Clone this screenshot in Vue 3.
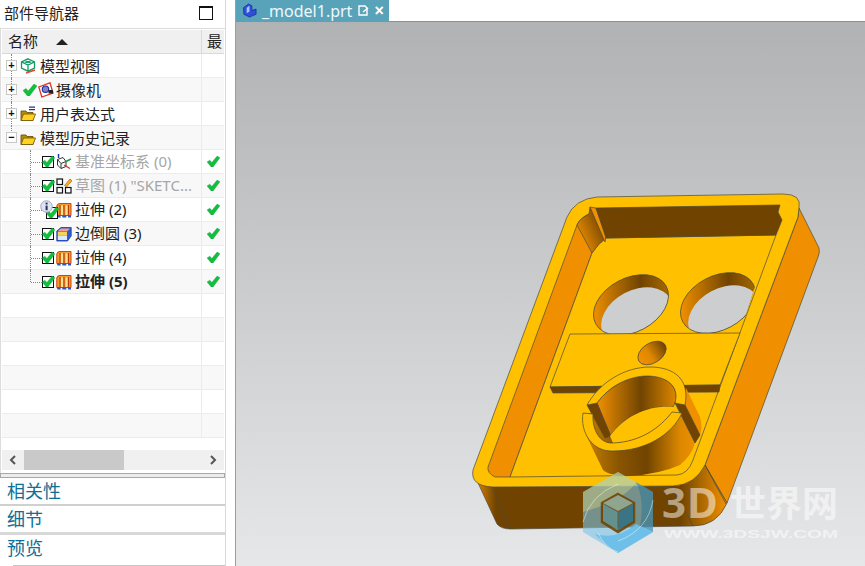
<script setup>
const treeTop = [
  { label: '模型视图', sign: '+', icon: 'view' },
  { label: '摄像机', sign: '+', icon: 'camera', check: true },
  { label: '用户表达式', sign: '+', icon: 'folderList' },
  { label: '模型历史记录', sign: '−', icon: 'folder', last: true },
]
const features = [
  { label: '基准坐标系 (0)', icon: 'datum', muted: true },
  { label: '草图 (1) "SKETC...', icon: 'sketch', muted: true },
  { label: '拉伸 (2)', icon: 'extrude', info: true },
  { label: '边倒圆 (3)', icon: 'blend' },
  { label: '拉伸 (4)', icon: 'extrude' },
  { label: '拉伸 (5)', icon: 'extrude', bold: true, end: true },
]
const emptyRows = 6
const checkPath = 'M0 6.500 L3 4.500 L5.200 7 L11 0 L14 2 L6.500 12 H4.500 Z'
</script>

<template>
  <div class="app">
    <aside class="side">
      <div class="side-inner">
        <header class="title">
          <span>部件导航器</span>
          <i class="maximize"></i>
        </header>
        <section class="table">
          <div class="thead">
            <div class="th-name">名称<i class="sort"></i></div>
            <div class="th-last">最</div>
          </div>
          <div class="tbody">
            <div v-for="(r, i) in treeTop" :key="r.label" class="row" :class="{ alt: i % 2 === 1 }">
              <div class="cell-name top" :class="{ 'has-trunk': !r.last, 'trunk-end': r.last }">
                <span class="expander">{{ r.sign }}</span>
                <svg v-if="r.check" class="mini-check" viewBox="0 0 14 12"><path :d="checkPath" fill="#12bf3a" stroke="#0a9a50" stroke-width=".4" /></svg>
                <svg class="icon" viewBox="0 0 16 16">
                  <template v-if="r.icon === 'view'">
                    <path d="M8 .8 L14.500 3.800 V10 L8 13.200 L1.500 10 V3.800 Z M1.500 3.800 L8 7 L14.500 3.800 M8 7 V13.200 M4.700 2.300 L11.300 5.400 M11.300 2.300 L4.700 5.400" fill="none" stroke="#0f9a66" stroke-width="1.300" />
                    <path d="M6 15 L15 12" stroke="#e8432a" stroke-width="1.600" />
                  </template>
                  <template v-else-if="r.icon === 'camera'">
                    <path d="M.8 5 L12 .8 L15 11 L3.800 15 Z" fill="#fff" stroke="#e0321c" stroke-width="1.300" />
                    <circle cx="7.500" cy="7.200" r="3.200" fill="#8a80c8" stroke="#1d2fa8" stroke-width="1.200" />
                    <rect x="10.500" y="8" width="4.500" height="3.500" fill="#222" />
                  </template>
                  <template v-else>
                    <path d="M1 5 H6 L7 6.500 H13 V14.500 H1 Z" fill="#b98a10" stroke="#6a5210" stroke-width=".9" />
                    <path d="M3.500 8 H15.500 L13 14.500 H1 Z" fill="#ffd21f" stroke="#7a5c10" stroke-width=".9" />
                    <path v-if="r.icon === 'folderList'" d="M9 1.200 H15 M9 3.600 H15" stroke="#2b2f9a" stroke-width="1.200" />
                  </template>
                </svg>
                <span class="label">{{ r.label }}</span>
              </div>
              <div class="cell-state"></div>
            </div>
            <div v-for="(f, i) in features" :key="f.label" class="row" :class="{ alt: i % 2 === 1 }">
              <div class="cell-name child" :class="{ 'child-end': f.end }">
                <span class="checkbox" :class="{ shifted: f.info }">
                  <svg viewBox="0 0 14 12"><path :d="checkPath" fill="#12bf3a" stroke="#0a9a50" stroke-width=".4" /></svg>
                </span>
                <svg v-if="f.info" class="info" viewBox="0 0 14 14">
                  <circle cx="7" cy="7" r="6.200" fill="#dfe4f2" stroke="#9aa3b8" />
                  <rect x="6" y="2.800" width="2.200" height="2" fill="#23306e" />
                  <rect x="6" y="6" width="2.200" height="5" fill="#23306e" />
                </svg>
                <svg class="icon" viewBox="0 0 16 16">
                  <template v-if="f.icon === 'datum'">
                    <path d="M1.500 5.500 L7 3.500 L10 7.500 L5 9.500 Z M1.500 5.500 V11 L5 14.500 V9.500 M5 14.500 L10 12.500 V7.500" fill="#fff" stroke="#333" stroke-width="1" />
                    <path d="M2.500 0 V4" stroke="#2030b0" stroke-width="1.400" />
                    <path d="M9 8 L15 5" stroke="#1c9a34" stroke-width="1.400" />
                    <path d="M8 11 L14 14.500" stroke="#d8302a" stroke-width="1.400" />
                  </template>
                  <template v-else-if="f.icon === 'sketch'">
                    <g fill="#fff" stroke="#111" stroke-width="1.200">
                      <rect x="1" y="1" width="5.500" height="5.500" />
                      <rect x="1" y="9.500" width="5.500" height="5.500" />
                      <rect x="9.500" y="9.500" width="5.500" height="5.500" />
                    </g>
                    <path d="M8.500 7.500 L14 1 L16 2.800 L10.500 9 Z" fill="#f5b21a" stroke="#a0601a" stroke-width=".7" />
                  </template>
                  <template v-else-if="f.icon === 'extrude'">
                    <path d="M.8 4 Q1 1.500 4 1.500 H15 V13.500 H.8 Z" fill="#f59a2e" stroke="#c8470e" stroke-width="1" />
                    <path d="M5 3.500 H7 V13 H5 Z M9.500 3.500 H11.500 V13 H9.500 Z" fill="#ffe28e" />
                    <path d="M4 3 V13.500 M8 3 V13.500 M12.500 3 V13.500" stroke="#b83c0c" stroke-width="1.100" />
                    <path d="M.8 13.500 H4 L5 15.500 H1.500 Z M6 13.500 H10 L10.500 15.500 H6.500 Z M12 13.500 H15 V15.500 H12 Z" fill="#3354c4" />
                  </template>
                  <template v-else>
                    <path d="M.8 5 L5 1.500 H15.200 V10 L11.500 15 H.8 Z" fill="#2f5cd0" stroke="#1c3a9a" stroke-width=".8" />
                    <path d="M2 5 L5 2.500 H14 L11 5.500 H2 Z" fill="#ff9a86" />
                    <path d="M1.800 6 H11 V9.500 H1.800 Z" fill="#f5d35a" />
                    <path d="M1.800 9.500 H11 V14 H1.800 Z" fill="#dfe8f7" />
                  </template>
                </svg>
                <span class="label" :class="{ muted: f.muted, strong: f.bold }">{{ f.label }}</span>
              </div>
              <div class="cell-state">
                <svg class="state-check" viewBox="0 0 14 12"><path :d="checkPath" fill="#12bf3a" stroke="#0a9a50" stroke-width=".4" /></svg>
              </div>
            </div>
            <div v-for="n in emptyRows" :key="n" class="row" :class="{ alt: n % 2 === 0 }">
              <div class="cell-name"></div>
              <div class="cell-state"></div>
            </div>
          </div>
          <div class="scrollbar">
            <svg class="chev" viewBox="0 0 8 10"><path d="M6 1 L2 5 L6 9" fill="none" stroke="#555" stroke-width="2" /></svg>
            <div class="track"><div class="thumb"></div></div>
            <svg class="chev" viewBox="0 0 8 10"><path d="M2 1 L6 5 L2 9" fill="none" stroke="#555" stroke-width="2" /></svg>
          </div>
        </section>
        <div class="sash"></div>
        <div class="panel-link first">相关性</div>
        <div class="panel-link second">细节</div>
        <div class="panel-link third">预览</div>
      </div>
    </aside>

    <main class="work">
      <div class="tabs">
        <div class="tab">
          <svg class="tab-icon" viewBox="0 0 16 16">
            <path d="M1.500 5 L7 1 L10.500 3 V8 L15 6.500 V12 L8 15 L2 12 Z" fill="#2f4fd8" stroke="#1a2c90" stroke-width=".8" />
            <path d="M5 5 L8 3 V9 L5 11 Z" fill="#a8c4ff" />
          </svg>
          <span class="tab-name">_model1.prt</span>
          <svg class="tab-doc" viewBox="0 0 11 11">
            <path d="M1 1 H7 L9 3 V10 H1 Z" fill="none" stroke="#fff" stroke-width="1.400" />
            <path d="M5 7 L10 3" stroke="#fff" stroke-width="1.600" />
          </svg>
          <span class="tab-close">×</span>
        </div>
      </div>
      <div class="viewport">
        <svg class="scene" viewBox="236 22 629 544">
          <defs>
            <linearGradient id="bottomWall" gradientUnits="userSpaceOnUse" x1="473" y1="0" x2="726" y2="0">
              <stop offset="0" stop-color="#f09000" />
              <stop offset=".09" stop-color="#704400" />
              <stop offset=".82" stop-color="#704400" />
              <stop offset="1" stop-color="#f09000" />
            </linearGradient>
            <linearGradient id="fillet" gradientUnits="userSpaceOnUse" x1="578" y1="240" x2="606" y2="228">
              <stop offset="0" stop-color="#f09000" />
              <stop offset="1" stop-color="#704400" />
            </linearGradient>
            <linearGradient id="holeA" gradientUnits="userSpaceOnUse" x1="592" y1="300" x2="668" y2="295">
              <stop offset="0" stop-color="#f09000" />
              <stop offset=".65" stop-color="#704400" />
              <stop offset="1" stop-color="#a56800" />
            </linearGradient>
            <linearGradient id="holeB" gradientUnits="userSpaceOnUse" x1="680" y1="300" x2="756" y2="295">
              <stop offset="0" stop-color="#f09000" />
              <stop offset=".65" stop-color="#704400" />
              <stop offset="1" stop-color="#a56800" />
            </linearGradient>
            <linearGradient id="holeC" gradientUnits="userSpaceOnUse" x1="637" y1="0" x2="667" y2="0">
              <stop offset="0" stop-color="#f09000" />
              <stop offset=".4" stop-color="#e08800" />
              <stop offset="1" stop-color="#704400" />
            </linearGradient>
            <linearGradient id="boss" gradientUnits="userSpaceOnUse" x1="585" y1="0" x2="697" y2="0">
              <stop offset="0" stop-color="#c88000" />
              <stop offset=".3" stop-color="#8a5500" />
              <stop offset=".55" stop-color="#704400" />
              <stop offset=".85" stop-color="#dc8800" />
              <stop offset="1" stop-color="#f09000" />
            </linearGradient>
            <linearGradient id="bossIn" gradientUnits="userSpaceOnUse" x1="597" y1="0" x2="677" y2="0">
              <stop offset="0" stop-color="#f09000" />
              <stop offset=".55" stop-color="#704400" />
              <stop offset="1" stop-color="#e08800" />
            </linearGradient>
            <clipPath id="clipA"><ellipse cx="631" cy="305" rx="40" ry="27" transform="rotate(-28 631 305)" /></clipPath>
            <clipPath id="clipB"><ellipse cx="718" cy="303" rx="40" ry="27" transform="rotate(-28 718 303)" /></clipPath>
            <clipPath id="aboveTable"><path d="M560,240 H770 L740,333 L570,334 Z" /></clipPath>
          </defs>

          <g stroke="#4a4a40" stroke-width=".7" stroke-linejoin="round">
            <path d="M799,208 L819,248 Q820,253 818,257 L727,503 L705,465 L798,217 Z" fill="#f09000" />
            <path d="M473,472 L497,524 Q501,529 511,529 L693,526 Q717,526 727,503 L705,465 L673,486 L493,487 Z" fill="url(#bottomWall)" />
            <path d="M492,488 L510,529 M672,487 L693,526 M705,465 L726,504" fill="none" />
            <path d="M567,217 Q575,199 597,197 L783,194 Q802,194 799,208 L798,217 L705,465 Q695,485 673,486 L493,487 Q470,486 473,470 Z" fill="#ffc000" />

            <path d="M589,214 Q580,218 577,225 L488,467 Q487,473 495,477 L510,477 L592,253 Z" fill="#f09000" />
            <path d="M606,238 L776,235 L693,460 Q688,474 677,475 L510,477 L592,253 Q598,243 606,238 Z" fill="#ffc000" />
            <path d="M589,214 Q580,218 577,225 L592,253 Q598,244 606,238 L590,207 Z" fill="url(#fillet)" />
            <path d="M590,207 L596,208 L606,236 L605,242 Z" fill="#f09000" />
            <path d="M596,208 L780,205 L778,212 L782,220 L776,235 L606,238 Z" fill="#704400" />
          </g>

          <g clip-path="url(#aboveTable)">
            <g clip-path="url(#clipA)">
              <rect x="585" y="270" width="95" height="70" fill="url(#holeA)" />
              <ellipse cx="637" cy="317" rx="38" ry="27" transform="rotate(-28 637 317)" fill="#ccced0" />
            </g>
            <ellipse cx="631" cy="305" rx="40" ry="27" transform="rotate(-28 631 305)" fill="none" stroke="#4a4a40" stroke-width=".7" />
            <g clip-path="url(#clipB)">
              <rect x="672" y="270" width="95" height="70" fill="url(#holeB)" />
              <ellipse cx="724" cy="315" rx="38" ry="27" transform="rotate(-28 724 315)" fill="#ccced0" />
              <path d="M756,280 L745,333 H770 V280 Z" fill="#ffc000" />
            </g>
            <ellipse cx="718" cy="303" rx="40" ry="27" transform="rotate(-28 718 303)" fill="none" stroke="#4a4a40" stroke-width=".7" />
            <path d="M756,292 L741,333" stroke="#4a4a40" stroke-width=".7" fill="none" />
          </g>

          <g stroke="#4a4a40" stroke-width=".7" stroke-linejoin="round">
            <path d="M570,334 L740,333 L720,385 L550,387 Z" fill="#ffc000" />
            <path d="M550,387 L720,385 L719,392 L553,393 Z" fill="#704400" />
            <ellipse cx="652" cy="353" rx="15.500" ry="10" transform="rotate(-32 652 353)" fill="url(#holeC)" />

            <path d="M686,388 L700,417 Q703,427 700,435 L695,443 L680,413 Z" fill="#f09000" stroke="none" />
            <path d="M583,413 L587,437 L603,470 Q610,476 630,476 Q660,474 680,465 Q692,455 695,443 L682,413 Z" fill="url(#boss)" stroke="none" />
            <path d="M597,403 C610,385 630,376 647,376 C665,376 680,385 675,403 L673,407 C650,405 625,415 610,436 Z" fill="url(#bossIn)" />
            <path d="M587,405 L597,403 L611,436 L605,438 Z" fill="#704400" />
            <path d="M685,405 L700,435 L695,443 L680,413 L675,403 Z" fill="#704400" />
            <path d="M610,436 C625,415 650,405 673,407 L672,412 C660,428 640,442 613,443 Z" fill="#ffc000" stroke="none" />
            <path d="M583,413 C580,432 592,452 613,451 C645,451 672,435 682,413 L672,412 C660,428 640,442 613,443 C600,444 592,430 593,414 Z" fill="#ffc000" />
            <path d="M587,405 C600,382 625,367 650,367 C675,367 690,380 685,405 L675,403 C680,385 665,376 647,376 C630,376 610,385 597,403 Z" fill="#ffc000" />
          </g>

          <g class="mark">
            <path d="M618,472 L653,492 V532 L618,553 L583,532 V492 Z" fill="#79c3ea" fill-opacity=".6" />
            <path d="M618,472 L636,482 Q625,500 583,512 V492 Z" fill="#ece27a" fill-opacity=".35" />
            <path d="M636,482 L653,492 V532 L640,526 Q645,500 636,482 Z" fill="#1f7396" fill-opacity=".45" />
            <path d="M595,534 Q618,540 636,524 L653,532 L618,553 L608,547 Z" fill="#6cbfe9" fill-opacity=".95" />
            <path d="M618,494 L634,503 V522 L618,532 L602,522 V503 Z" fill="#704400" fill-opacity=".7" stroke="#704400" stroke-opacity=".85" stroke-width="2.500" />
            <path d="M618,495 L633,503 L618,511 L603,503 Z" fill="#8fa58f" />
            <path d="M603,504 L617.500,512 V530 L603,521 Z" fill="#64918e" />
            <path d="M633,504 L618.500,512 V530 L633,521 Z" fill="#3a7585" />
            <path d="M583,522 Q590,495 618,484 M653,500 Q648,530 618,541 M598,533 Q605,548 618,552" fill="none" stroke="#fff" stroke-opacity=".55" stroke-width=".8" />
            <text class="mark-big" x="662" y="518">3D</text>
            <text class="mark-han" x="730" y="517">世界网</text>
            <text class="mark-small" x="664" y="538" textLength="174" lengthAdjust="spacingAndGlyphs">WWW.3DSJW.COM</text>
          </g>
        </svg>
      </div>
    </main>
  </div>
</template>

<style scoped>
.app {
  width: 865px;
  height: 566px;
  display: flex;
  overflow: hidden;
  background: #fff;
  font-family: "Noto Sans", "Noto Sans CJK SC", sans-serif;
  color: #222;
}
.side {
  width: 236px;
  flex: none;
  box-sizing: border-box;
  border-right: 1px solid #9c9c9c;
  padding-right: 9px;
}
.side-inner {
  height: 100%;
  border-right: 1px solid #d8d8d8;
  display: flex;
  flex-direction: column;
}
.title {
  height: 28px;
  display: flex;
  align-items: center;
  justify-content: space-between;
  padding: 0 6px 2px 4px;
  box-sizing: border-box;
  font-size: 15px;
  line-height: 20px;
}
.maximize {
  width: 12px;
  height: 11px;
  border: 1px solid #111;
  border-top-width: 2px;
  margin-right: 6px;
}
.table {
  border-top: 1px solid #dcdcdc;
  border-left: 1px solid #dcdcdc;
  height: 443px;
  box-sizing: content-box;
  display: flex;
  flex-direction: column;
  padding: 1px 0 0 1px;
}
.thead {
  height: 23px;
  display: flex;
  background: #f0f0f0;
  border-bottom: 1px solid #d9d9d9;
  margin-right: 1px;
  font-size: 15px;
  line-height: 23px;
}
.th-name {
  width: 200px;
  padding-left: 6px;
  box-sizing: border-box;
  border-right: 1px solid #d9d9d9;
  display: flex;
  align-items: center;
}
.sort {
  margin-left: 18px;
  border: 6px solid transparent;
  border-top: 0;
  border-bottom: 6px solid #222;
}
.th-last {
  flex: 1;
  padding-left: 5px;
  overflow: hidden;
}
.tbody {
  flex: 1;
  overflow: hidden;
}
.row {
  height: 24px;
  box-sizing: border-box;
  display: flex;
  border-bottom: 1px solid #ececec;
  margin-right: 1px;
}
.row.alt {
  background: #f8f8f8;
}
.cell-name {
  width: 200px;
  flex: none;
  box-sizing: border-box;
  border-right: 1px solid #ececec;
  display: flex;
  align-items: center;
  position: relative;
  white-space: nowrap;
  font-size: 15px;
}
.cell-state {
  flex: 1;
  display: flex;
  align-items: center;
  justify-content: center;
}
.cell-name.top {
  padding-left: 4px;
}
.cell-name.has-trunk::before,
.cell-name.trunk-end::before {
  content: "";
  position: absolute;
  left: 9px;
  top: 0;
  bottom: -1px;
  border-left: 1px dotted #888;
}
.cell-name.trunk-end::before {
  bottom: 12px;
}
.expander {
  position: relative;
  z-index: 1;
  width: 9px;
  height: 9px;
  border: 1px solid #c8c8c8;
  background: #fff;
  font: 700 11px/9px "Liberation Sans", sans-serif;
  color: #111;
  text-align: center;
  flex: none;
  box-sizing: content-box;
  margin-right: 3px;
}
.mini-check {
  width: 14px;
  height: 12px;
  margin-right: 1px;
  margin-left: 3px;
}
.icon {
  width: 16px;
  height: 16px;
  flex: none;
  margin-right: 4px;
}
.mini-check + .icon {
  margin-right: 2px;
}
.label {
  line-height: 20px;
}
.cell-name.child {
  padding-left: 40px;
}
.cell-name.child .icon {
  margin-right: 3px;
}
.cell-name.child .label {
  margin-top: -1px;
}
.cell-name.child::before {
  content: "";
  position: absolute;
  left: 28px;
  top: 0;
  bottom: -1px;
  border-left: 1px dotted #888;
}
.cell-name.child::after {
  content: "";
  position: absolute;
  left: 29px;
  width: 11px;
  top: 12px;
  border-top: 1px dotted #888;
}
.cell-name.child-end::before {
  bottom: 11px;
}
.checkbox {
  width: 10px;
  height: 10px;
  border: 1px solid #111;
  background: #fff;
  flex: none;
  margin-right: 2px;
  position: relative;
  z-index: 1;
}
.checkbox svg {
  position: absolute;
  left: -1px;
  top: -1px;
  width: 13px;
  height: 11px;
}
.checkbox.shifted {
  transform: translate(4px, 3px);
}
.info {
  position: absolute;
  left: 38px;
  top: 2px;
  width: 13px;
  height: 13px;
  z-index: 2;
}
.muted {
  color: #a6a6a6;
}
.strong {
  font-weight: 700;
}
.state-check {
  width: 13px;
  height: 11px;
}
.scrollbar {
  height: 20px;
  margin: auto 1px 3px 0;
  background: #f0f0f0;
  display: flex;
  align-items: center;
}
.chev {
  width: 8px;
  height: 10px;
  margin: 0 7px;
  flex: none;
}
.track {
  flex: 1;
  height: 100%;
}
.thumb {
  width: 100px;
  height: 100%;
  background: #c9c9c9;
}
.sash {
  height: 5px;
  box-sizing: border-box;
  border: 1px solid #a8a8a8;
  background: #ececec;
  flex: none;
}
.panel-link {
  font-size: 18px;
  line-height: 24px;
  color: #0f6f94;
  padding-left: 7px;
  box-sizing: border-box;
}
.first {
  height: 28px;
  padding-top: 1px;
  border-bottom: 2px solid #d0d0d0;
}
.second {
  height: 29px;
  padding-top: 1px;
  border-bottom: 3px solid #d8d8d8;
}
.third {
  flex: 1;
  padding-top: 1px;
  position: relative;
}
.third::after {
  content: "";
  position: absolute;
  left: 13px;
  right: 0;
  bottom: 0;
  border-top: 1px solid #c8c8c8;
}
.work {
  flex: 1;
  display: flex;
  flex-direction: column;
  min-width: 0;
}
.tabs {
  height: 22px;
  flex: none;
  background: #fff;
  border-bottom: 1px solid #58a3ba;
  box-sizing: border-box;
}
.tab {
  width: 153px;
  height: 21px;
  background: #58a3ba;
  display: flex;
  align-items: center;
  padding-left: 6px;
  box-sizing: border-box;
  color: #fff;
}
.tab-icon {
  width: 15px;
  height: 15px;
  flex: none;
}
.tab-name {
  margin-left: 5px;
  font-size: 16px;
  line-height: 20px;
  color: #eef8fb;
  white-space: nowrap;
}
.tab-doc {
  width: 11px;
  height: 11px;
  margin-left: 6px;
  flex: none;
}
.tab-close {
  font: 700 16px/16px "Liberation Sans", sans-serif;
  margin-left: 5px;
}
.viewport {
  flex: 1;
  min-height: 0;
  background: linear-gradient(#b1b2b3, #e6e7e8);
}
.scene {
  display: block;
  width: 100%;
  height: 100%;
}
.mark-big {
  font: 700 42px "Noto Sans", sans-serif;
  letter-spacing: 1px;
  fill: #fff;
  fill-opacity: .5;
}
.mark-han {
  font: 700 36px "Noto Sans CJK SC", sans-serif;
  fill: #fff;
  fill-opacity: .55;
}
.mark-small {
  font: 700 11px "Liberation Sans", sans-serif;
  fill: #fff;
  fill-opacity: .55;
}
</style>

<style>
html, body {
  margin: 0;
  background: #fff;
}
</style>
